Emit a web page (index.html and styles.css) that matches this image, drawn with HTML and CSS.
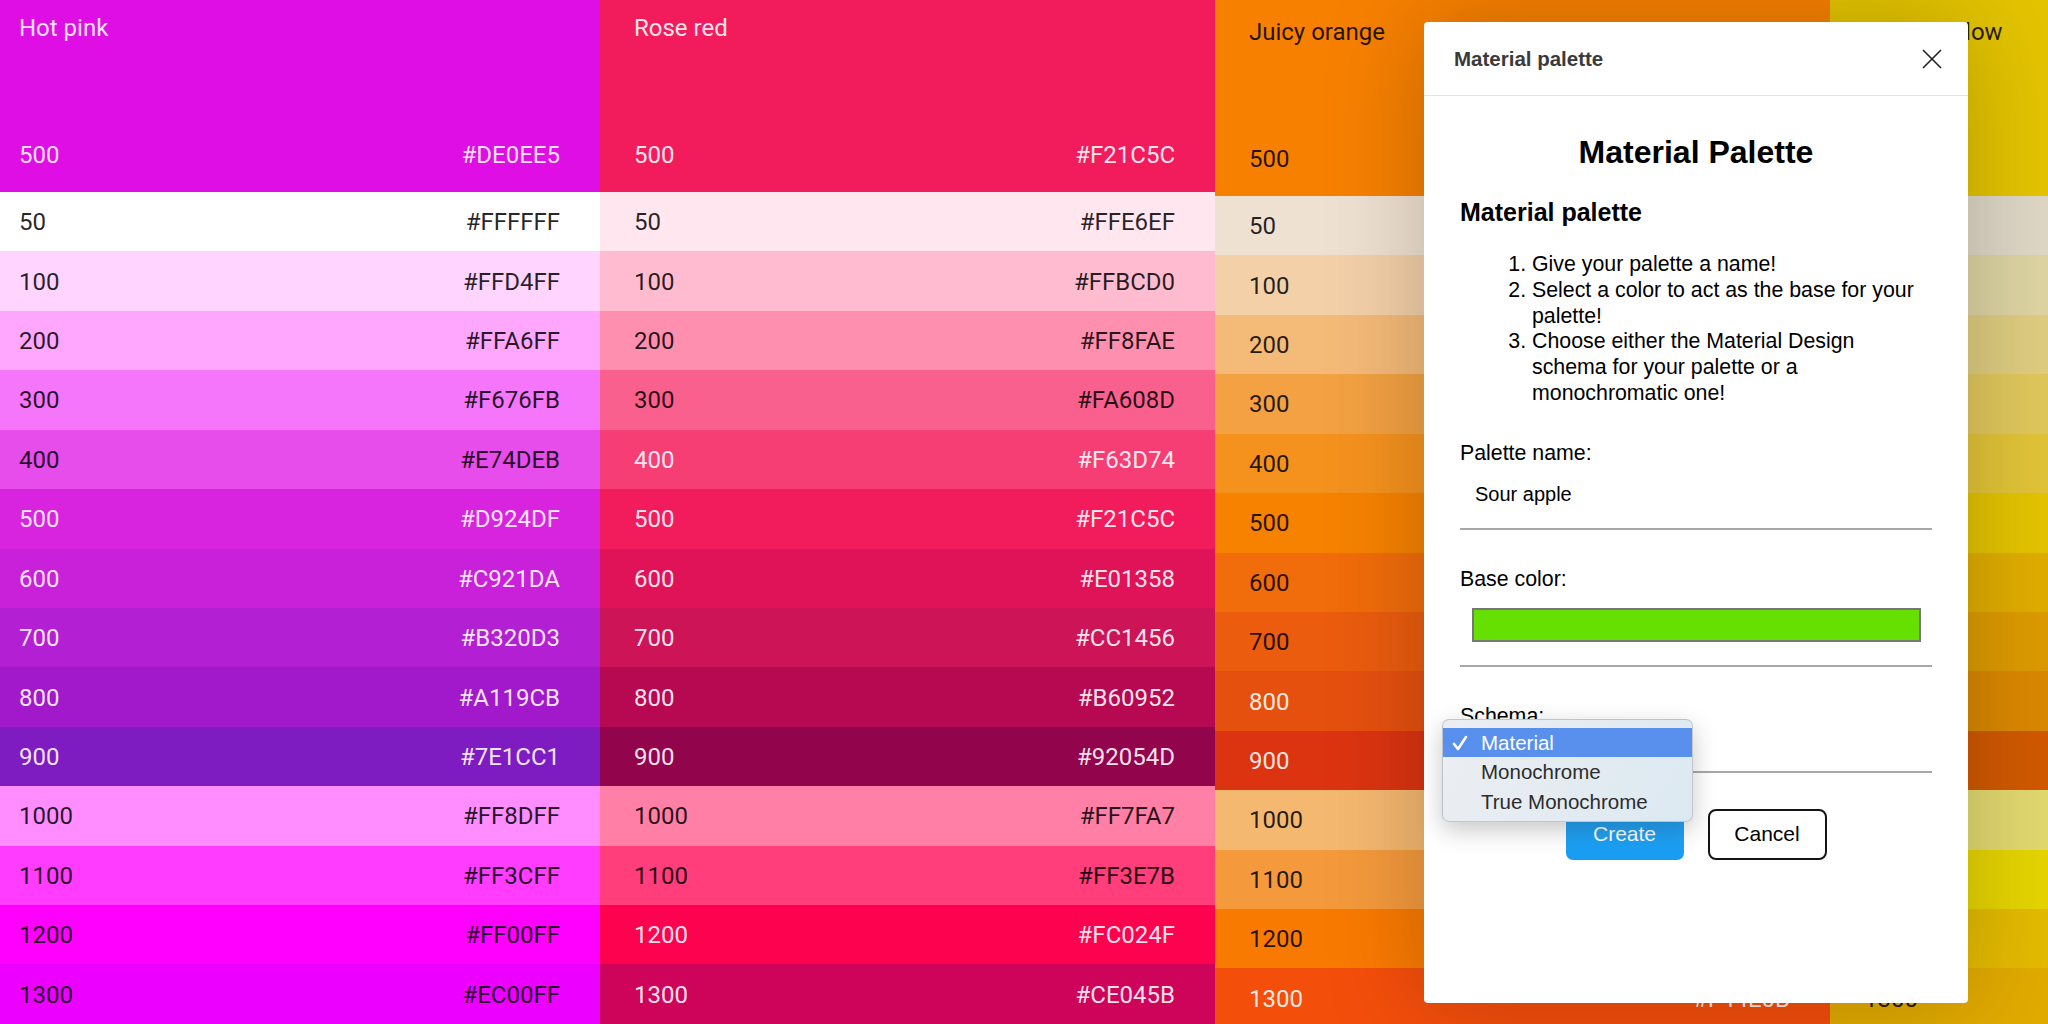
FILE: index.html
```html
<!DOCTYPE html>
<html lang="en">
<head>
<meta charset="utf-8">
<title>Material palette</title>
<link rel="stylesheet" href="styles.css">
</head>
<body>
<div class="palettes">
  <section class="col">
    <div class="col-head light" style="background:#DE0EE5"><div class="title">Hot pink</div><div class="base"><span>500</span><span>#DE0EE5</span></div></div>
    <div class="row dark" style="background:#FFFFFF"><span>50</span><span>#FFFFFF</span></div>
    <div class="row dark" style="background:#FFD4FF"><span>100</span><span>#FFD4FF</span></div>
    <div class="row dark" style="background:#FFA6FF"><span>200</span><span>#FFA6FF</span></div>
    <div class="row dark" style="background:#F676FB"><span>300</span><span>#F676FB</span></div>
    <div class="row dark" style="background:#E74DEB"><span>400</span><span>#E74DEB</span></div>
    <div class="row light" style="background:#D924DF"><span>500</span><span>#D924DF</span></div>
    <div class="row light" style="background:#C921DA"><span>600</span><span>#C921DA</span></div>
    <div class="row light" style="background:#B320D3"><span>700</span><span>#B320D3</span></div>
    <div class="row light" style="background:#A119CB"><span>800</span><span>#A119CB</span></div>
    <div class="row light" style="background:#7E1CC1"><span>900</span><span>#7E1CC1</span></div>
    <div class="row dark" style="background:#FF8DFF"><span>1000</span><span>#FF8DFF</span></div>
    <div class="row dark" style="background:#FF3CFF"><span>1100</span><span>#FF3CFF</span></div>
    <div class="row dark" style="background:#FF00FF"><span>1200</span><span>#FF00FF</span></div>
    <div class="row dark" style="background:#EC00FF"><span>1300</span><span>#EC00FF</span></div>
  </section>
  <section class="col">
    <div class="col-head light" style="background:#F21C5C"><div class="title">Rose red</div><div class="base"><span>500</span><span>#F21C5C</span></div></div>
    <div class="row dark" style="background:#FFE6EF"><span>50</span><span>#FFE6EF</span></div>
    <div class="row dark" style="background:#FFBCD0"><span>100</span><span>#FFBCD0</span></div>
    <div class="row dark" style="background:#FF8FAE"><span>200</span><span>#FF8FAE</span></div>
    <div class="row dark" style="background:#FA608D"><span>300</span><span>#FA608D</span></div>
    <div class="row light" style="background:#F63D74"><span>400</span><span>#F63D74</span></div>
    <div class="row light" style="background:#F21C5C"><span>500</span><span>#F21C5C</span></div>
    <div class="row light" style="background:#E01358"><span>600</span><span>#E01358</span></div>
    <div class="row light" style="background:#CC1456"><span>700</span><span>#CC1456</span></div>
    <div class="row light" style="background:#B60952"><span>800</span><span>#B60952</span></div>
    <div class="row light" style="background:#92054D"><span>900</span><span>#92054D</span></div>
    <div class="row dark" style="background:#FF7FA7"><span>1000</span><span>#FF7FA7</span></div>
    <div class="row dark" style="background:#FF3E7B"><span>1100</span><span>#FF3E7B</span></div>
    <div class="row light" style="background:#FC024F"><span>1200</span><span>#FC024F</span></div>
    <div class="row light" style="background:#CE045B"><span>1300</span><span>#CE045B</span></div>
  </section>
  <section class="col shift">
    <div class="col-head dark" style="background:#F78000"><div class="title">Juicy orange</div><div class="base"><span>500</span><span>#F78000</span></div></div>
    <div class="row dark" style="background:#EFE1D1"><span>50</span><span>#EFE1D1</span></div>
    <div class="row dark" style="background:#F3D0A8"><span>100</span><span>#F3D0A8</span></div>
    <div class="row dark" style="background:#F4BA78"><span>200</span><span>#F4BA78</span></div>
    <div class="row dark" style="background:#F3A142"><span>300</span><span>#F3A142</span></div>
    <div class="row dark" style="background:#F5921E"><span>400</span><span>#F5921E</span></div>
    <div class="row dark" style="background:#F78200"><span>500</span><span>#F78200</span></div>
    <div class="row dark" style="background:#F16C0A"><span>600</span><span>#F16C0A</span></div>
    <div class="row dark" style="background:#EB5C0E"><span>700</span><span>#EB5C0E</span></div>
    <div class="row light" style="background:#E6500F"><span>800</span><span>#E6500F</span></div>
    <div class="row light" style="background:#DC3411"><span>900</span><span>#DC3411</span></div>
    <div class="row dark" style="background:#F5B870"><span>1000</span><span>#F5B870</span></div>
    <div class="row dark" style="background:#F49A3C"><span>1100</span><span>#F49A3C</span></div>
    <div class="row dark" style="background:#F97A00"><span>1200</span><span>#F97A00</span></div>
    <div class="row light" style="background:#F44E0B"><span>1300</span><span>#F44E0B</span></div>
  </section>
  <section class="col shift">
    <div class="col-head dark" style="background:#E4C400"><div class="title">Sunny yellow</div><div class="base"><span>500</span><span>#E4C400</span></div></div>
    <div class="row dark" style="background:#DFD8C7"><span>50</span><span>#DFD8C7</span></div>
    <div class="row dark" style="background:#DED4A3"><span>100</span><span>#DED4A3</span></div>
    <div class="row dark" style="background:#DFCD80"><span>200</span><span>#DFCD80</span></div>
    <div class="row dark" style="background:#E1C85C"><span>300</span><span>#E1C85C</span></div>
    <div class="row dark" style="background:#E2C438"><span>400</span><span>#E2C438</span></div>
    <div class="row dark" style="background:#E4C400"><span>500</span><span>#E4C400</span></div>
    <div class="row dark" style="background:#E0AD00"><span>600</span><span>#E0AD00</span></div>
    <div class="row dark" style="background:#DD9B00"><span>700</span><span>#DD9B00</span></div>
    <div class="row dark" style="background:#DA8800"><span>800</span><span>#DA8800</span></div>
    <div class="row dark" style="background:#D15900"><span>900</span><span>#D15900</span></div>
    <div class="row dark" style="background:#E3D970"><span>1000</span><span>#E3D970</span></div>
    <div class="row dark" style="background:#E6D500"><span>1100</span><span>#E6D500</span></div>
    <div class="row dark" style="background:#E4BB00"><span>1200</span><span>#E4BB00</span></div>
    <div class="row dark" style="background:#E2AB00"><span>1300</span><span>#E2AB00</span></div>
  </section>
</div>

<div class="modal">
  <div class="modal-head">
    <span class="modal-title">Material palette</span>
    <svg class="close" width="20" height="20" viewBox="0 0 20 20"><path d="M1 1 L19 19 M19 1 L1 19" stroke="#222" stroke-width="1.6" fill="none"/></svg>
  </div>
  <section class="modal-body">
    <h1>Material Palette</h1>
    <h2>Material palette</h2>
    <ol class="steps">
      <li>Give your palette a name!</li>
      <li>Select a color to act as the base for your palette!</li>
      <li>Choose either the Material Design schema for your palette or a monochromatic one!</li>
    </ol>
    <div class="field">
      <label class="label">Palette name:</label>
      <div class="text-input">Sour apple</div>
    </div>
    <div class="field">
      <label class="label">Base color:</label>
      <div class="color-wrap"><div class="swatch"></div></div>
    </div>
    <div class="field">
      <label class="label">Schema:</label>
      <div class="select-box">Material</div>
    </div>
    <div class="buttons">
      <button class="btn btn-create">Create</button>
      <button class="btn btn-cancel">Cancel</button>
    </div>
  </section>
  <div class="popup">
    <div class="opt selected"><svg class="check" width="16" height="16" viewBox="0 0 16 16"><path d="M2 9 L6 14 L14 2" stroke="#fff" stroke-width="2.6" fill="none" stroke-linecap="round" stroke-linejoin="round"/></svg>Material</div>
    <div class="opt">Monochrome</div>
    <div class="opt">True Monochrome</div>
  </div>
</div>
</body>
</html>
```

FILE: styles.css
```css
html, body {
  margin: 0;
  padding: 0;
}
body {
  width: 2048px;
  height: 1024px;
  overflow: hidden;
  position: relative;
  font-family: Roboto, "Liberation Sans", sans-serif;
  background: #fff;
}
.palettes {
  display: flex;
  margin-left: -15px;
}
.col {
  flex: none;
  width: 615px;
}
.col-head {
  height: 192px;
  box-sizing: border-box;
  display: flex;
  flex-direction: column;
  justify-content: space-between;
  padding: 14px 40px 23px 34px;
  font-size: 24px;
  line-height: 28px;
}
.col.shift .col-head {
  height: 196px;
  padding-top: 18px;
}
.base {
  display: flex;
  justify-content: space-between;
}
.row {
  height: 59.43px;
  box-sizing: border-box;
  display: flex;
  align-items: center;
  justify-content: space-between;
  padding: 1px 40px 0 34px;
  font-size: 24px;
  line-height: 28px;
}
.light { color: rgba(255, 255, 255, 0.9); }
.dark { color: rgba(0, 0, 0, 0.85); }

/* modal */
.modal {
  position: absolute;
  left: 1424px;
  top: 22px;
  width: 544px;
  height: 981px;
  background: #fff;
  border-radius: 4px;
  box-shadow: 0 0 100px rgba(0, 0, 0, 0.22);
  font-family: "Liberation Sans", Arial, sans-serif;
  color: #000;
}
.modal-head {
  height: 74px;
  box-sizing: border-box;
  border-bottom: 1px solid #e3e3e3;
  display: flex;
  align-items: center;
  justify-content: space-between;
  padding: 0 26px 0 30px;
}
.modal-title {
  font-size: 20.5px;
  font-weight: 700;
  color: #3a3a3a;
}
.close { display: block; }
.modal-body {
  padding: 0 36px;
}
h1 {
  margin: 38px 0 0;
  font-size: 32px;
  font-weight: 700;
  text-align: center;
  line-height: normal;
}
h2 {
  margin: 27px 0 0;
  font-size: 25px;
  font-weight: 700;
  line-height: normal;
}
.steps {
  margin: 25px 0 0;
  padding: 0 4px 0 72px;
  font-size: 21.33px;
  line-height: 25.8px;
}
.field {
  margin-top: 37px;
  border-bottom: 2px solid #a8a8a8;
}
.steps + .field {
  margin-top: 34.5px;
}
.label {
  display: block;
  font-size: 21.33px;
  line-height: normal;
}
.text-input {
  margin-top: 4px;
  padding: 12px 15px 22px;
  font-size: 20px;
  line-height: 24px;
}
.color-wrap {
  padding: 15.5px 11px 23px 11.6px;
}
.swatch {
  height: 34px;
  box-sizing: border-box;
  border: 2px solid #777;
  background: #66e000;
}
.select-box {
  height: 42.5px;
  box-sizing: border-box;
  padding: 10px 15px 0;
  font-size: 20px;
}
.buttons {
  margin-top: 35.5px;
  display: flex;
  justify-content: center;
  gap: 24px;
}
.btn {
  height: 51px;
  font-family: "Liberation Sans", Arial, sans-serif;
  font-size: 21px;
  padding: 0;
  cursor: pointer;
}
.btn-create {
  width: 118px;
  border: none;
  border-radius: 7px;
  background: linear-gradient(#2aa8f7, #169cf3);
  color: #fff;
}
.btn-cancel {
  width: 119px;
  border: 2px solid #151515;
  border-radius: 8px;
  background: #fff;
  color: #000;
}

/* native select popup */
.popup {
  position: absolute;
  left: 18px;
  top: 697px;
  width: 251px;
  height: 103px;
  box-sizing: border-box;
  padding-top: 8px;
  border: 1px solid rgba(0, 0, 0, 0.16);
  border-radius: 7px;
  background: linear-gradient(120deg, #eceef2, #dce9f2);
  box-shadow: 0 8px 24px rgba(0, 0, 0, 0.22);
  font-family: "Liberation Sans", Arial, sans-serif;
  font-size: 20.5px;
  color: #2c2c2c;
  overflow: hidden;
}
.opt {
  position: relative;
  height: 29.3px;
  line-height: 29.3px;
  padding-left: 38px;
}
.opt.selected {
  background: #5990ee;
  color: #fff;
}
.check {
  position: absolute;
  left: 9px;
  top: 7px;
}
```
